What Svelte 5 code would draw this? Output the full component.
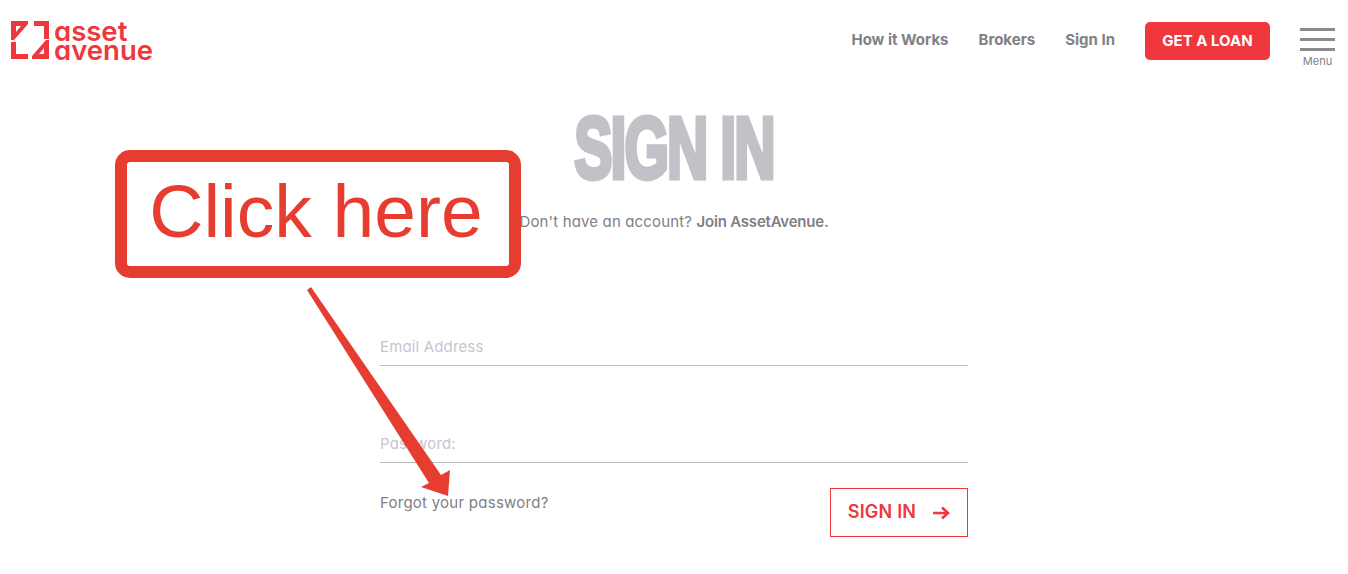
<script>
	const links = ['How it Works', 'Brokers', 'Sign In'];
</script>

<div class="page">
	<header class="header">
		<a class="logo" href="/">
			<svg class="logo-mark" viewBox="0 0 38 38" width="38" height="38">
				<path fill="#f0373d" fill-rule="evenodd" d="M0 0H17V3L3 19H0ZM5 5V11L10 5Z" />
				<path fill="#f0373d" d="M23 0H38V18H33V5H23Z" />
				<path fill="#f0373d" d="M0 21H5V33H17V38H0Z" />
				<path fill="#f0373d" fill-rule="evenodd" d="M38 38H21V35L35 19H38ZM33 33V27L28 33Z" />
			</svg>
			<span class="logo-text">asset<br />avenue</span>
		</a>
		<nav class="nav">
			{#each links as link}
				<a class="nav-link" href="/">{link}</a>
			{/each}
			<a class="loan-button" href="/">GET A LOAN</a>
			<div class="menu">
				<span class="menu-bar"></span>
				<span class="menu-bar"></span>
				<span class="menu-bar"></span>
				<span class="menu-label">Menu</span>
			</div>
		</nav>
	</header>

	<main class="main">
		<h1 class="title">SIGN IN</h1>
		<p class="subtitle">Don't have an account? <a href="/">Join AssetAvenue.</a></p>

		<form class="form">
			<div class="field email">Email Address</div>
			<div class="field password">Password:</div>
			<div class="actions">
				<a class="forgot" href="/">Forgot your password?</a>
				<button class="submit" type="button">
					<span class="submit-label">SIGN IN</span>
					<svg viewBox="0 0 18 14" width="18" height="14">
						<path d="M1 7H16M10 1.5L16 7L10 12.5" fill="none" stroke="#f0373d" stroke-width="2.6" />
					</svg>
				</button>
			</div>
		</form>
	</main>

	<div class="callout">Click here</div>
	<svg class="pointer" viewBox="0 0 1348 574" width="1348" height="574">
		<path fill="#e73c30" d="M307 290L311 287L441 475L450 470L448 496L421 487L429 483Z" />
	</svg>
</div>

<style>
	:global(body) {
		background: #fff;
	}

	.page {
		position: relative;
		height: 574px;
		overflow: hidden;
		font-family: Inter, Lato, sans-serif;
		font-feature-settings: 'cv11';
		color: #808086;
	}

	a {
		color: inherit;
		text-decoration: none;
	}

	.header {
		display: flex;
		justify-content: space-between;
		height: 80px;
		padding: 21px 13px 0 11px;
		box-sizing: border-box;
	}

	.logo {
		display: flex;
		gap: 5px;
		height: 38px;
	}

	.logo-text {
		font-size: 27.5px;
		line-height: 19px;
		font-weight: 600;
		color: #f0373d;
		padding-top: 1px;
	}

	.nav {
		display: flex;
		align-items: flex-start;
		font-size: 15px;
		font-weight: 700;
	}

	.nav-link {
		margin-right: 30px;
		line-height: 38px;
		height: 38px;
	}

	.loan-button {
		width: 125px;
		height: 38px;
		line-height: 38px;
		margin-top: 1px;
		text-align: center;
		background: #f0373d;
		color: #fff;
		border-radius: 5px;
	}

	.menu {
		display: flex;
		flex-direction: column;
		gap: 7px;
		width: 35px;
		margin: 7px 0 0 30px;
		align-items: center;
	}

	.menu-bar {
		display: block;
		width: 35px;
		height: 3px;
		background: #8a8a8e;
	}

	.menu-label {
		margin-top: -3px;
		font-size: 11px;
		line-height: 12px;
		font-weight: 400;
	}

	.main {
		width: 588px;
		margin: 0 auto;
	}

	.title {
		margin: 22px 0 0;
		height: 92px;
		font-family: 'Liberation Sans', sans-serif;
		font-size: 88px;
		line-height: 92px;
		font-weight: 700;
		letter-spacing: -3px;
		text-align: center;
		color: #c1c2c7;
		-webkit-text-stroke: 5px #c1c2c7;
		transform: scaleX(0.65);
		white-space: nowrap;
	}

	.subtitle {
		margin: 18px 0 0;
		font-size: 15px;
		line-height: 20px;
		letter-spacing: 0.15px;
		text-align: center;
	}

	.subtitle a {
		font-weight: 600;
		letter-spacing: -0.2px;
	}

	.form {
		margin-top: 94px;
	}

	.field {
		height: 39px;
		line-height: 42px;
		font-size: 15px;
		letter-spacing: 0.15px;
		color: #c5c6d0;
		border-bottom: 1px solid #bdbdbd;
	}

	.password {
		margin-top: 57px;
	}

	.actions {
		display: flex;
		justify-content: space-between;
		align-items: flex-start;
		margin-top: 25px;
	}

	.forgot {
		font-size: 15px;
		letter-spacing: 0.25px;
		line-height: 30px;
	}

	.submit {
		display: flex;
		align-items: center;
		justify-content: center;
		gap: 16px;
		width: 138px;
		height: 49px;
		padding: 0;
		background: #fff;
		border: 1px solid #f0373d;
		color: #f0373d;
		font: 600 18px Inter, Lato, sans-serif;
		font-feature-settings: 'cv11';
	}

	.submit-label {
		margin-bottom: 2px;
		letter-spacing: 0.2px;
	}

	.callout {
		position: absolute;
		left: 115px;
		top: 150px;
		width: 406px;
		height: 128px;
		box-sizing: border-box;
		border: 12px solid #e73c30;
		border-radius: 15px;
		background: #fff;
		font-family: 'Liberation Sans', sans-serif;
		font-size: 75px;
		line-height: 98px;
		text-indent: -4px;
		text-align: center;
		color: #e73c30;
	}

	.pointer {
		position: absolute;
		left: 0;
		top: 0;
		pointer-events: none;
	}
</style>
